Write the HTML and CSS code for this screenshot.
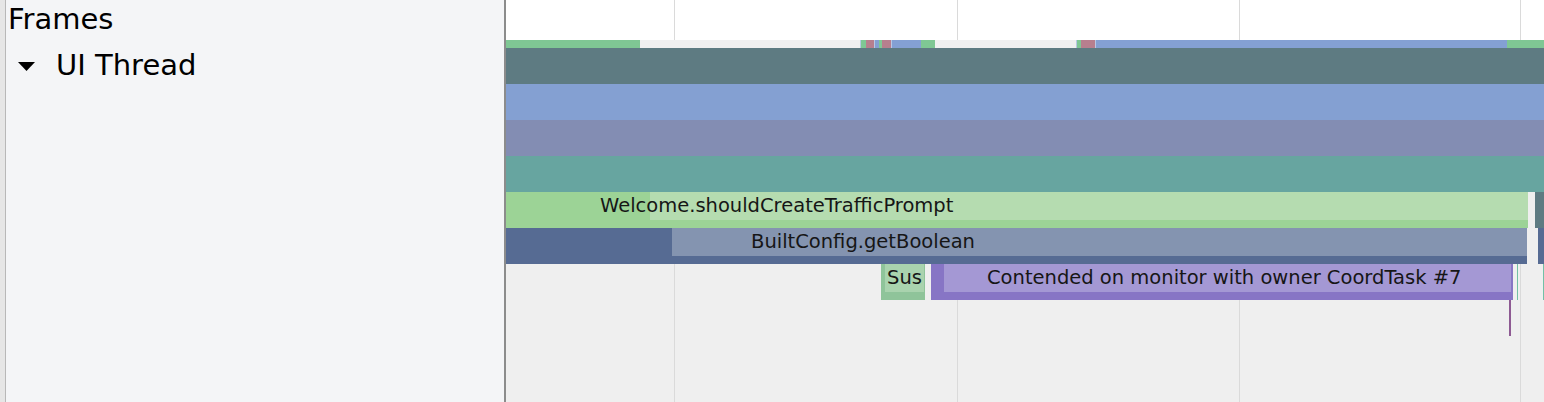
FILE: index.html
```html
<!DOCTYPE html>
<html>
<head>
<meta charset="utf-8">
<link rel="stylesheet" href="styles.css">
</head>
<body>
<div class="app">
  <div class="side">
    <div class="label frames-label">Frames</div>
    <div class="label thread-label">
      <svg class="caret" width="17" height="9" viewBox="0 0 17 9"><polygon points="0,0 17,0 8.5,9" fill="#000"/></svg>
      <span>UI Thread</span>
    </div>
  </div>
  <div class="chart">
    <div class="grid">
      <div class="gl" style="left:168px"></div>
      <div class="gl" style="left:451px"></div>
      <div class="gl" style="left:733px"></div>
      <div class="gl" style="left:1014px"></div>
    </div>
    <div class="tracks">
      <div class="header"></div>
      <div class="framebar">
        <div class="seg f-green" style="left:0;width:134px"></div>
        <div class="seg f-sep" style="left:354px;width:1px"></div>
        <div class="seg f-green" style="left:355px;width:5px"></div>
        <div class="seg f-pink" style="left:360px;width:8px"></div>
        <div class="seg f-sep" style="left:368px;width:1px"></div>
        <div class="seg f-blue" style="left:369px;width:4px"></div>
        <div class="seg f-green" style="left:373px;width:3px"></div>
        <div class="seg f-pink" style="left:376px;width:9px"></div>
        <div class="seg f-sep" style="left:385px;width:1px"></div>
        <div class="seg f-blue" style="left:386px;width:29px"></div>
        <div class="seg f-green" style="left:415px;width:14px"></div>
        <div class="seg f-sep" style="left:570px;width:1px"></div>
        <div class="seg f-green" style="left:571px;width:4px"></div>
        <div class="seg f-pink" style="left:575px;width:14px"></div>
        <div class="seg f-sep" style="left:589px;width:1px"></div>
        <div class="seg f-blue" style="left:590px;width:411px"></div>
        <div class="seg f-green" style="left:1001px;width:37px"></div>
      </div>
      <div class="row full slate"></div>
      <div class="row full blue"></div>
      <div class="row full violet"></div>
      <div class="row full teal"></div>
      <div class="row">
        <div class="slice green" style="left:0;width:1022px">
          <div class="self green-l" style="left:144px;width:878px"></div>
          <span class="txt" style="left:94px">Welcome.shouldCreateTrafficPrompt</span>
        </div>
        <div class="slice slate" style="left:1029px;width:9px"></div>
      </div>
      <div class="row">
        <div class="slice navy" style="left:0;width:1021px">
          <div class="self navy-l" style="left:166px;width:855px"></div>
          <span class="txt" style="left:245px">BuiltConfig.getBoolean</span>
        </div>
        <div class="slice navy" style="left:1032px;width:6px"></div>
      </div>
      <div class="row">
        <div class="slice sus" style="left:375px;width:44px">
          <div class="self sus-l" style="left:4px;width:39px"></div>
          <span class="txt" style="left:6px">Sus</span>
        </div>
        <div class="slice mon" style="left:425px;width:582px">
          <div class="self mon-l" style="left:13px;width:567px"></div>
          <span class="txt" style="left:56px">Contended on monitor with owner CoordTask #7</span>
        </div>
        <div class="slice tick" style="left:1011px;width:1px"></div>
        <div class="slice tick" style="left:1037px;width:1px"></div>
      </div>
      <div class="row">
        <div class="slice plum" style="left:1003px;width:2px"></div>
      </div>
    </div>
  </div>
</div>
</body>
</html>
```

FILE: styles.css
```css
html, body {
  margin: 0;
  padding: 0;
}
body {
  width: 1544px;
  height: 402px;
  overflow: hidden;
  font-family: "DejaVu Sans", sans-serif;
  color: #111;
}
.app {
  display: flex;
  width: 1544px;
  height: 402px;
}
.side {
  box-sizing: border-box;
  width: 506px;
  flex: none;
  height: 402px;
  background: #f4f5f7;
  border-right: 2px solid #8c8c8c;
  box-shadow: inset 5px 0 0 #e6e6e6, inset 6px 0 0 #b8b8b8;
  display: flex;
  flex-direction: column;
}
.label {
  font-size: 29px;
  line-height: 36px;
  height: 36px;
  color: #000;
}
.frames-label {
  margin-top: 1px;
  padding-left: 8px;
}
.thread-label {
  margin-top: 10px;
  padding-left: 18px;
  display: flex;
  align-items: center;
  gap: 21px;
}
.caret {
  display: block;
  margin-top: 2px;
}
.chart {
  position: relative;
  width: 1038px;
  height: 402px;
  background: linear-gradient(#ffffff 0, #ffffff 40px, #efefef 40px);
}
.grid {
  position: absolute;
  inset: 0;
}
.gl {
  position: absolute;
  top: 0;
  bottom: 0;
  width: 1px;
  background: #dadada;
}
.tracks {
  position: relative;
  display: flex;
  flex-direction: column;
}
.header {
  height: 40px;
}
.framebar {
  position: relative;
  height: 8px;
  background: #f0f0f0;
}
.seg {
  position: absolute;
  top: 0;
  height: 8px;
}
.f-green { background: #7fc794; }
.f-pink { background: #b77f8e; }
.f-blue { background: #84a0d3; }
.f-sep { background: #b9c8e4; }
.row {
  position: relative;
  height: 36px;
}
.row.full.slate { background: #5e7b82; }
.row.full.blue { background: #84a0d2; }
.row.full.violet { background: #838db3; }
.row.full.teal { background: #67a5a0; }
.slice {
  position: absolute;
  top: 0;
  height: 36px;
}
.self {
  position: absolute;
  top: 0;
  height: 28px;
}
.txt {
  position: absolute;
  top: 0;
  font-size: 19.5px;
  line-height: 28px;
  white-space: nowrap;
  color: #161616;
}
.slice.slate { background: #5e7b82; }
.green { background: #9cd396; }
.green-l { background: #b5dcb0; }
.navy { background: #566b93; }
.navy-l { background: #8494b0; }
.sus { background: #8fc49a; }
.sus-l { background: #a9d3ae; }
.mon { background: #8775c5; }
.mon-l { background: #a498d4; }
.tick { background: #72c0a6; }
.plum { background: #8e5a93; }
```
